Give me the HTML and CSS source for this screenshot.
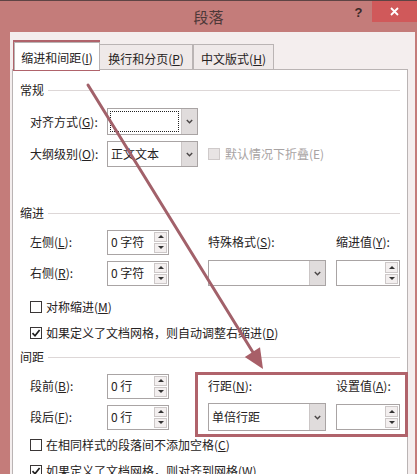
FILE: index.html
```html
<!DOCTYPE html>
<html lang="zh-CN">
<head>
<meta charset="utf-8">
<title>段落</title>
<link rel="stylesheet" href="styles.css">
</head>
<body>
<div class="window">
  <div class="titlebar">
    <div class="title">段落</div>
    <div class="tb-right">
      <div class="help">?</div>
      <div class="close"><svg width="9" height="9" viewBox="0 0 9 9"><path d="M1 1L8 8M8 1L1 8" stroke="#fff" stroke-width="1.8" fill="none"/></svg></div>
    </div>
  </div>
  <div class="client">
    <div class="tabs">
      <div class="tab active">缩进和间距(<u>I</u>)</div>
      <div class="tab t2">换行和分页(<u>P</u>)</div>
      <div class="tab t3">中文版式(<u>H</u>)</div>
    </div>
    <div class="panel">
      <div class="group g1"><span>常规</span></div>

      <div class="row row-g">
        <span class="lbl">对齐方式(<u>G</u>):</span>
        <div class="combo c-align">
          <div class="combo-text"><span class="focus"></span></div>
          <div class="drop"><svg width="7" height="5" viewBox="0 0 7 5"><path d="M0.8 1L3.5 3.8L6.2 1" stroke="#4a4646" stroke-width="1.4" fill="none"/></svg></div>
        </div>
      </div>

      <div class="row row-o">
        <span class="lbl">大纲级别(<u>O</u>):</span>
        <div class="combo c-outline">
          <div class="combo-text">正文文本</div>
          <div class="drop"><svg width="7" height="5" viewBox="0 0 7 5"><path d="M0.8 1L3.5 3.8L6.2 1" stroke="#4a4646" stroke-width="1.4" fill="none"/></svg></div>
        </div>
        <span class="chk disabled"></span>
        <span class="dis-text">默认情况下折叠(E)</span>
      </div>

      <div class="group g2"><span>缩进</span></div>

      <div class="grid grid-indent">
        <span class="lbl">左侧(<u>L</u>):</span>
        <div class="spin"><div class="spin-text">0 字符</div><div class="spin-btns"><span class="sb up"></span><span class="sb down"></span></div></div>
        <span class="lbl">特殊格式(<u>S</u>):</span>
        <span class="lbl">缩进值(<u>Y</u>):</span>

        <span class="lbl">右侧(<u>R</u>):</span>
        <div class="spin"><div class="spin-text">0 字符</div><div class="spin-btns"><span class="sb up"></span><span class="sb down"></span></div></div>
        <div class="combo c-wide">
          <div class="combo-text"></div>
          <div class="drop"><svg width="7" height="5" viewBox="0 0 7 5"><path d="M0.8 1L3.5 3.8L6.2 1" stroke="#4a4646" stroke-width="1.4" fill="none"/></svg></div>
        </div>
        <div class="spin s-val"><div class="spin-text"></div><div class="spin-btns"><span class="sb up"></span><span class="sb down"></span></div></div>
      </div>

      <div class="check-row ck1"><span class="chk"></span><span>对称缩进(<u>M</u>)</span></div>
      <div class="check-row ck2"><span class="chk"><svg width="10" height="10" viewBox="0 0 10 10"><path d="M1.5 5.2L4 7.8L8.6 2" stroke="#1e1e1e" stroke-width="1.7" fill="none"/></svg></span><span>如果定义了文档网格，则自动调整右缩进(<u>D</u>)</span></div>

      <div class="group g3"><span>间距</span></div>

      <div class="grid grid-spacing">
        <span class="lbl">段前(<u>B</u>):</span>
        <div class="spin"><div class="spin-text">0 行</div><div class="spin-btns"><span class="sb up"></span><span class="sb down"></span></div></div>
        <span class="lbl">行距(<u>N</u>):</span>
        <span class="lbl">设置值(<u>A</u>):</span>

        <span class="lbl">段后(<u>F</u>):</span>
        <div class="spin"><div class="spin-text">0 行</div><div class="spin-btns"><span class="sb up"></span><span class="sb down"></span></div></div>
        <div class="combo c-wide tall">
          <div class="combo-text">单倍行距</div>
          <div class="drop"><svg width="7" height="5" viewBox="0 0 7 5"><path d="M0.8 1L3.5 3.8L6.2 1" stroke="#4a4646" stroke-width="1.4" fill="none"/></svg></div>
        </div>
        <div class="spin s-val"><div class="spin-text"></div><div class="spin-btns"><span class="sb up"></span><span class="sb down"></span></div></div>
      </div>

      <div class="check-row ck3"><span class="chk"></span><span>在相同样式的段落间不添加空格(<u>C</u>)</span></div>
      <div class="check-row ck4"><span class="chk"><svg width="10" height="10" viewBox="0 0 10 10"><path d="M1.5 5.2L4 7.8L8.6 2" stroke="#1e1e1e" stroke-width="1.7" fill="none"/></svg></span><span>如果定义了文档网格，则对齐到网格(<u>W</u>)</span></div>
    </div>
  </div>
</div>
<svg class="annot" width="417" height="474" viewBox="0 0 417 474">
  <rect x="14.5" y="41.5" width="84" height="28" fill="none" stroke="#b0636b" stroke-width="3"/>
  <rect x="196.5" y="373.5" width="210" height="62" fill="none" stroke="#b0636b" stroke-width="3"/>
  <line x1="88" y1="85" x2="254" y2="354" stroke="#a2616a" stroke-width="3" stroke-linecap="round"/>
  <polygon points="263,369 244.8,356.9 260,347.3" fill="#a85f68"/>
</svg>
</body>
</html>
```

FILE: styles.css
```css
* { box-sizing: border-box; }
html, body { margin: 0; padding: 0; }
body {
  position: relative;
  width: 417px;
  height: 474px;
  overflow: hidden;
  background: #c47c7a;
  font-family: "Noto Sans CJK SC", "Microsoft YaHei", sans-serif;
  font-size: 12px;
  line-height: 16px;
  color: #262222;
}
u { text-decoration: underline; text-underline-offset: 1px; }

.window {
  width: 417px;
  height: 474px;
  background: #c47c7a;
  border-top: 1px solid #5e4444;
  display: flex;
  flex-direction: column;
  overflow: hidden;
}

.titlebar {
  flex: none;
  height: 31px;
  display: grid;
  grid-template-columns: 1fr auto 1fr;
}
.title {
  grid-column: 2;
  line-height: 32px;
  font-size: 15px;
  color: #4d3838;
}
.tb-right {
  grid-column: 3;
  display: flex;
  justify-content: flex-end;
  align-items: flex-start;
}
.help {
  width: 27px;
  height: 24px;
  line-height: 24px;
  text-align: center;
  font-family: "Liberation Sans", sans-serif;
  font-weight: bold;
  font-size: 13px;
  color: #3a2828;
}
.close {
  width: 45px;
  height: 21px;
  background: #d0595a;
  display: flex;
  align-items: center;
  justify-content: center;
}

.client {
  flex: 1;
  margin: 0 2px 0 10px;
  background: #f4eeee;
  padding: 10px 7px 0 2px;
  display: flex;
  flex-direction: column;
}

.tabs {
  display: flex;
  align-items: flex-end;
  height: 28px;
  margin: 0 0 -1px 2px;
}
.tab {
  height: 26px;
  border: 1px solid #bab4b4;
  border-bottom: none;
  background: #efe9e9;
  text-align: center;
  padding-top: 6px;
  white-space: nowrap;
}
.tab + .tab { border-left: none; }
.tab.active {
  position: relative;
  z-index: 1;
  height: 28px;
  width: 86px;
  background: #fff;
  padding-top: 7px;
}
.tab.t2 { width: 93px; }
.tab.t3 { width: 81px; border-left: 1px solid #bab4b4; }

.panel {
  flex: 1;
  background: #fff;
  border: 1px solid #bab4b4;
  padding: 0 7px;
  display: flex;
  flex-direction: column;
}

.group {
  display: flex;
  align-items: center;
  gap: 4px;
  height: 16px;
}
.group::after {
  content: "";
  flex: 1;
  height: 1px;
  background: #ddd7d7;
}
.g1 { margin-top: 12px; }
.g2 { margin-top: 38px; }
.g3 { margin-top: 8px; }

.row {
  display: flex;
  align-items: center;
  padding-left: 10px;
}
.row .lbl { width: 77px; }
.row-g { margin-top: 10px; height: 27px; }
.row-o { margin-top: 6px; height: 26px; }

.combo {
  display: flex;
  border: 1px solid #a9a4a4;
  background: #fff;
}
.combo-text {
  flex: 1;
  padding: 0 3px;
  display: flex;
  align-items: center;
}
.drop {
  width: 16px;
  background: #e0dcdc;
  border-left: 1px solid #cbc6c6;
  display: flex;
  align-items: center;
  justify-content: center;
}
.c-align { width: 91px; height: 27px; }
.c-align .combo-text { padding: 2px 2px 2px 2px; }
.focus {
  display: block;
  width: 100%;
  height: 100%;
  border: 1px dotted #222;
}
.c-outline { width: 91px; height: 26px; }
.c-wide { width: 118px; height: 26px; }
.c-wide.tall { height: 28px; }

.chk {
  flex: none;
  width: 12px;
  height: 12px;
  border: 1px solid #3a3636;
  background: #fff;
  display: inline-flex;
  align-items: center;
  justify-content: center;
}
.chk.disabled {
  margin-left: 10px;
  border-color: #cfcaca;
  background: #e8e4e4;
}
.dis-text {
  margin-left: 5px;
  color: #a8a3a3;
}

.grid {
  display: grid;
  grid-template-columns: 77px 101px 128px 64px;
  grid-template-rows: 24px 26px;
  row-gap: 6px;
  align-items: center;
  padding-left: 10px;
  margin-top: 9px;
}
.grid-spacing { margin-top: 9px; }

.spin {
  width: 62px;
  height: 25px;
  border: 1px solid #a9a4a4;
  background: #fff;
  display: flex;
}
.spin.s-val { width: 64px; height: 26px; }
.spin-text {
  flex: 1;
  padding-left: 3px;
  display: flex;
  align-items: center;
}
.spin-btns {
  width: 14px;
  padding: 1px 1px 1px 0;
  display: flex;
  flex-direction: column;
  gap: 1px;
}
.sb {
  flex: 1;
  background: #f3efef;
  border: 1px solid #cdc8c8;
  display: flex;
  align-items: center;
  justify-content: center;
}
.sb::before {
  content: "";
  width: 0;
  height: 0;
  border-left: 3px solid transparent;
  border-right: 3px solid transparent;
}
.sb.up::before { border-bottom: 3px solid #333; }
.sb.down::before { border-top: 3px solid #333; }

.check-row {
  display: flex;
  align-items: center;
  gap: 4px;
  height: 16px;
  padding-left: 10px;
  white-space: nowrap;
}
.ck1 { margin-top: 13px; }
.ck2 { margin-top: 10px; }
.ck3 { margin-top: 7px; }
.ck4 { margin-top: 10px; }

.annot {
  position: absolute;
  left: 0;
  top: 0;
  pointer-events: none;
}
```
